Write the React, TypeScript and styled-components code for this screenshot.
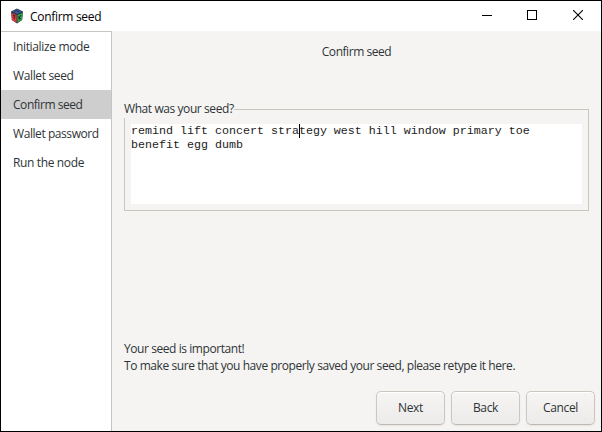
import React from "react";
import styled, { createGlobalStyle } from "styled-components";

const Global = createGlobalStyle`
  * { box-sizing: border-box; }
  body { margin: 0; font-family: "Open Sans", "Noto Sans", sans-serif; font-size: 12px; color: #2e3436; }
`;

const Window = styled.div`
  width: 602px;
  height: 432px;
  display: flex;
  flex-direction: column;
  border: 1px solid #000;
  background: #fff;
  overflow: hidden;
`;

const TitleBar = styled.header`
  flex: 0 0 30px;
  display: flex;
  align-items: center;
  padding-left: 9px;
  color: #000;
`;

const AppIcon = styled.svg`
  width: 14px;
  height: 16px;
  margin: -1px 6px 0 0;
`;

const Label = styled.span<{ $track?: number }>`
  white-space: pre;
  letter-spacing: ${(p) => p.$track ?? 0}px;
`;

const Controls = styled.div`
  display: flex;
  margin-left: auto;
`;

const ControlButton = styled.button<{ $width: number }>`
  width: ${(p) => p.$width}px;
  height: 30px;
  padding: 0 0 2px;
  border: 0;
  background: transparent;
  display: flex;
  align-items: center;
  justify-content: center;
`;

const Body = styled.div`
  flex: 1;
  display: flex;
  min-height: 0;
`;

const Sidebar = styled.nav`
  flex: 0 0 111px;
  border-top: 1px solid #c6c6c0;
  border-right: 1px solid #c6c6c0;
  background: #fff;
`;

const Step = styled.div<{ $active?: boolean }>`
  height: 29px;
  padding-left: 12px;
  line-height: 30px;
  background: ${(p) => (p.$active ? "#cecece" : "transparent")};
`;

const Main = styled.main`
  flex: 1;
  min-width: 0;
  display: flex;
  flex-direction: column;
  padding: 0 6px 6px 12px;
  background: #f5f4f3;
`;

const Heading = styled.h1`
  margin: 12px 6px 0 0;
  font-size: 12px;
  font-weight: 400;
  line-height: 18px;
  text-align: center;
`;

const SeedFrame = styled.fieldset`
  width: 465px;
  height: 111px;
  margin: 39px 0 0;
  padding: 6px;
  border: 1px solid #c8c7bf;
  min-width: 0;
`;

const Legend = styled.legend`
  margin-left: -7px;
  padding: 0;
  height: 18px;
  line-height: 18px;
`;

const SeedText = styled.div`
  height: 80px;
  background: #fff;
  color: #1c1c1c;
  font: 11.667px/14px "Liberation Mono", monospace;
  white-space: pre;
`;

const Caret = styled.span`
  display: inline-block;
  width: 1px;
  height: 14px;
  margin-right: -1px;
  vertical-align: top;
  background: #000;
`;

const Notes = styled.div`
  display: flex;
  flex-direction: column;
  margin-top: auto;
  line-height: 17px;
`;

const Actions = styled.footer`
  display: flex;
  justify-content: flex-end;
  gap: 6px;
  margin-top: 17px;
`;

const ActionButton = styled.button`
  width: 69px;
  height: 34px;
  padding: 0 0 1px;
  border: 1px solid #cdc7c2;
  border-bottom-color: #bfb8b1;
  border-radius: 5px;
  background: linear-gradient(#f6f5f4, #edebe9);
  box-shadow: inset 0 1px #fff, 0 1px 2px rgba(0, 0, 0, 0.07);
  color: #2e3436;
  font: inherit;
  letter-spacing: -0.35px;
`;

const STEPS: { name: string; track: number }[] = [
  { name: "Initialize mode", track: -0.35 },
  { name: "Wallet seed", track: -0.36 },
  { name: "Confirm seed", track: -0.45 },
  { name: "Wallet password", track: -0.43 },
  { name: "Run the node", track: -0.36 },
];

function CubeIcon() {
  return (
    <AppIcon viewBox="0 0 14 16">
      <path d="M7 0.5 13 3.5 12.2 12 7 15.5 1.8 12 1 3.5Z" fill="#30323a" />
      <path d="M7 1 12 3.6 7 6 2 3.6Z" fill="#3560a8" />
      <path d="M1.3 4.7 6.6 7v7.8L2.2 11.9Z" fill="#dc3a40" />
      <path d="M12.7 4.7 7.4 7v7.8l4.4-2.9Z" fill="#2aa548" />
      <path d="m4.5 3.5 2-1 1 1 2-.5M3 7l2.5 1M4.2 7.5v3.5M9 8v3.5m2-4.5-2 3 2 1" fill="none" stroke="#20242c" strokeWidth="0.9" />
    </AppIcon>
  );
}

export default function App() {
  return (
    <>
      <Global />
      <Window>
        <TitleBar>
          <CubeIcon />
          <Label $track={-0.3}>Confirm seed</Label>
          <Controls>
            <ControlButton $width={44} aria-label="Minimize">
              <svg width="10" height="10" shapeRendering="crispEdges"><path d="M0 5.5h10" stroke="#000" /></svg>
            </ControlButton>
            <ControlButton $width={46} aria-label="Maximize">
              <svg width="10" height="10" shapeRendering="crispEdges"><path d="M.5.5h9v9h-9z" fill="none" stroke="#000" /></svg>
            </ControlButton>
            <ControlButton $width={46} aria-label="Close">
              <svg width="10" height="10"><path d="m0 0 10 10M10 0 0 10" stroke="#000" strokeWidth="1.1" /></svg>
            </ControlButton>
          </Controls>
        </TitleBar>
        <Body>
          <Sidebar>
            {STEPS.map((s) => (
              <Step key={s.name} $active={s.name === "Confirm seed"}>
                <Label $track={s.track}>{s.name}</Label>
              </Step>
            ))}
          </Sidebar>
          <Main>
            <Heading><Label $track={-0.45}>Confirm seed</Label></Heading>
            <SeedFrame>
              <Legend><Label $track={-0.42}>What was your seed?</Label></Legend>
              <SeedText>
                remind lift concert stra<Caret />tegy west hill window primary toe{"\n"}benefit egg dumb
              </SeedText>
            </SeedFrame>
            <Notes>
              <Label $track={-0.43}>Your seed is important!</Label>
              <Label $track={-0.43}>To make sure that you have properly saved your seed, please retype it here.</Label>
            </Notes>
            <Actions>
              <ActionButton>Next</ActionButton>
              <ActionButton>Back</ActionButton>
              <ActionButton>Cancel</ActionButton>
            </Actions>
          </Main>
        </Body>
      </Window>
    </>
  );
}
